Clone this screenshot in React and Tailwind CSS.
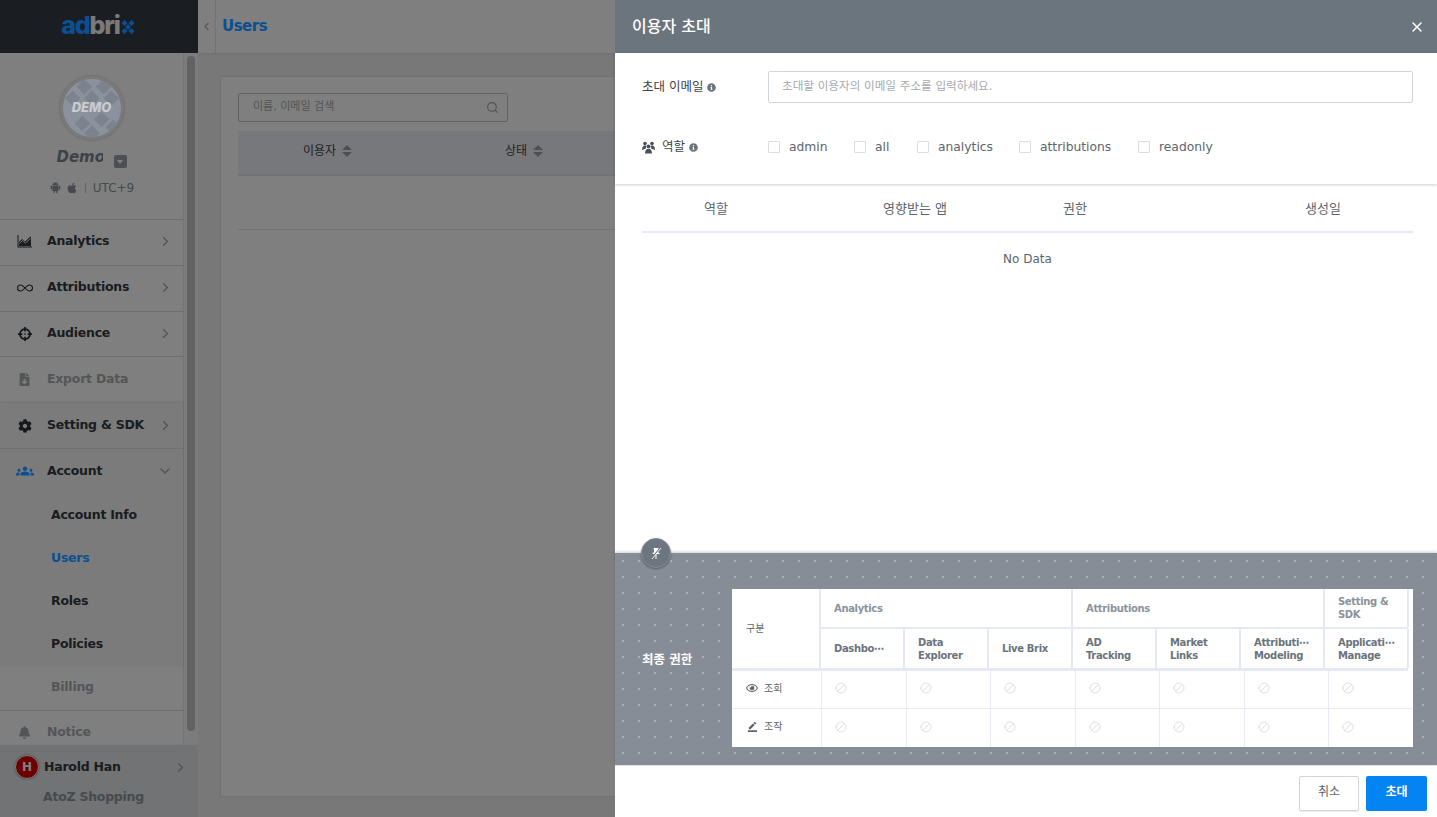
import { ChevronDown, ChevronLeft, ChevronRight, Ban, Infinity as InfinityIcon, Search, X } from "lucide-react";
import { AiFillAndroid } from "react-icons/ai";
import { FaApple, FaBell, FaCog, FaCrosshairs, FaFileDownload, FaInfoCircle, FaRegEye } from "react-icons/fa";
import { MdBorderColor, MdGroups } from "react-icons/md";

const font = "font-['DejaVu_Sans','Noto_Sans_CJK_KR',sans-serif]";

function ChartIcon() {
  return (
    <svg width="15" height="13" viewBox="0 0 15 13" fill="currentColor">
      <path d="M0.5 0v12.5H15v-1H1.5V0z" />
      <path d="M2 11V7l3-3 3 2.5L13.5 1.5 14 2v9z" opacity="0.95" />
      <path d="M2.5 8.5l3-3 3 2.5 5-4.5" fill="none" stroke="#fff" strokeWidth="0.9" />
    </svg>
  );
}

function PinOffIcon() {
  return (
    <svg width="14" height="14" viewBox="0 0 14 14" fill="none" stroke="#fff">
      <path d="M4 2h6l-1 1v3l2 2H3l2-2V3z" fill="#fff" stroke="none" />
      <path d="M7 8v5" strokeWidth="1" />
      <path d="M2 13L12 1" strokeWidth="1.2" stroke="#6d7680" />
      <path d="M3 13L12 2" strokeWidth="0.9" />
    </svg>
  );
}

function RoleIcon() {
  return (
    <svg width="13" height="13" viewBox="0 0 13 13" fill="#4a5057">
      <circle cx="3" cy="2.6" r="1.8" />
      <circle cx="10" cy="2.6" r="1.8" />
      <circle cx="6.5" cy="5.4" r="1.9" />
      <path d="M0 9c0-3 1-4.500 3-4.500.7 0 1.200.2 1.600.5-.6.7-.9 1.700-.9 2.800-.9.3-2.300.7-3.700 1.200zM13 9c0-3-1-4.500-3-4.500-.7 0-1.200.2-1.600.5.6.7.9 1.700.9 2.800.9.3 2.300.7 3.700 1.200z" />
      <path d="M3 12.500c0-3.200 1.300-4.800 3.500-4.800s3.500 1.600 3.500 4.800z" />
    </svg>
  );
}

function DemoBadge() {
  return (
    <div className="w-[64px] h-[64px] rounded-full bg-[#f4f4f4] p-[3px] shadow-[0_0_3px_rgba(0,0,0,0.25)]">
      <div className="relative z-10 w-full h-full rounded-full overflow-hidden bg-[#8b929d] flex items-center justify-center">
        <svg className="absolute inset-0" width="58" height="58" viewBox="0 0 60 60" fill="#7c838e">
          <path d="M22 0l8 8-8 8-8-8zM42 0l8 8-8 8-8-8zM10 12l8 8-8 8-8-8zM30 12l8 8-8 8-8-8zM50 12l8 8-8 8-8-8zM20 38l8 8-8 8-8-8zM40 34l8 8-8 8-8-8zM30 48l8 8-8 8-8-8zM52 42l8 8-8 8-8-8z" />
        </svg>
        <span className="relative text-[13px] font-extrabold italic text-[#c9ccd1] font-['Inter',sans-serif]">DEMO</span>
      </div>
    </div>
  );
}

function NavRow({ icon, label, open, muted, active, className = "h-[46px] pb-[2px] border-b border-[#dcdfe0]" }) {
  return (
    <div className={`flex items-center pl-[17px] pr-[10px] ${className}`}>
      <span className={`relative w-[15px] h-[16px] flex items-center justify-center ${active ? "z-10 text-[#0a4f92]" : muted ? "text-[#a8abae]" : "text-[#2c3136]"}`}>
        {icon}
      </span>
      <span className={`ml-[15px] flex-1 text-[12.5px] tracking-[-0.25px] font-bold ${muted ? "text-[#a8abae]" : "text-[#343a40]"}`}>{label}</span>
      {!muted &&
        (open ? (
          <ChevronDown size={16} className="text-[#a0a4a8]" />
        ) : (
          <ChevronRight size={15} className="text-[#a0a4a8]" />
        ))}
    </div>
  );
}

function SubRow({ label, color = "text-[#343a40]", raised }) {
  return (
    <div className={`h-[43px] flex items-center pl-[51px] pb-[2px] text-[12.5px] tracking-[-0.25px] font-bold ${color} ${raised ? "relative z-10" : ""}`}>
      {label}
    </div>
  );
}

function Sidebar() {
  return (
    <aside className="w-[198px] shrink-0 flex flex-col">
      <div className="h-[53px] bg-[#343c44] flex items-center justify-center">
        <div className="flex items-center -mt-[2px] ml-[-2px]">
          <span className="relative z-10 text-[25px] leading-none font-extrabold tracking-[-1.2px] font-['Inter',sans-serif] text-[#0a4f92]">ad</span>
          <span className="text-[25px] leading-none font-extrabold tracking-[-1.2px] font-['Inter',sans-serif] text-[#f5f5f5]">bri</span>
          <svg width="14" height="14" viewBox="0 0 14 14" fill="#0a4f92" className="relative z-10 mt-[3px] ml-[1px]">
            <path d="M3.5 0l3 3-3 3-3-3zM10.5 0l3 3-3 3-3-3zM7 4l3 3-3 3-3-3zM3.5 8l3 3-3 3-3-3zM10.5 8l3 3-3 3-3-3z" />
          </svg>
        </div>
      </div>
      <div className="flex-1 flex min-h-0">
        <div className="w-[184px] shrink-0 flex flex-col bg-white border-r border-[#e6e8e8]">
          <div className="h-[167px] border-b border-[#dcdfe0] flex flex-col items-center pt-[23px]">
            <DemoBadge />
            <div className="mt-[6px] flex items-start w-[70px]">
              <span className="text-[15px] font-bold italic text-[#7d858d] w-[46px] overflow-hidden">Demo</span>
              <span className="ml-[11px] mt-[9px] w-[13px] h-[13px] rounded-[2px] bg-[#9aa0a7] flex items-center justify-center">
                <span className="border-x-[3px] border-x-transparent border-t-[4px] border-t-white" />
              </span>
            </div>
            <div className="mt-[10px] flex items-center text-[12px] text-[#8e9399]">
              <AiFillAndroid size={13} />
              <FaApple size={12} className="ml-[4px]" />
              <span className="mx-[7px] w-px h-[10px] bg-[#c5c8cb]" />
              <span>UTC+9</span>
            </div>
          </div>
          <NavRow icon={<ChartIcon />} label="Analytics" />
          <NavRow icon={<InfinityIcon size={18} strokeWidth={1.5} className="shrink-0" />} label="Attributions" />
          <NavRow icon={<FaCrosshairs size={14} />} label="Audience" className="h-[45px] pb-[1px] border-b border-[#dcdfe0]" />
          <NavRow icon={<FaFileDownload size={13} />} label="Export Data" muted className="h-[46px] pb-[2px]" />
          <div className="bg-[#f6f7f7] shadow-[0_-1px_2px_rgba(0,0,0,0.12)]">
            <NavRow icon={<FaCog size={14} />} label="Setting & SDK" className="h-[46px] border-b border-[#dcdfe0]" />
            <NavRow icon={<MdGroups size={18} className="shrink-0" />} label="Account" open active className="h-[46px] pb-[2px]" />
            <SubRow label="Account Info" />
            <SubRow label="Users" color="text-[#0a4f92]" raised />
            <SubRow label="Roles" />
            <SubRow label="Policies" />
          </div>
          <SubRow label="Billing" color="text-[#a8abae]" />
          <div className="h-[35px] border-t border-[#dcdfe0] flex items-center pl-[17px] pt-[8px] text-[12.5px] tracking-[-0.25px] font-bold text-[#a8abae]">
            <FaBell size={13} className="ml-[1px]" />
            <span className="ml-[16px]">Notice</span>
          </div>
        </div>
        <div className="w-[14px] shrink-0 bg-[#f8f8f8]">
          <div className="w-[8px] h-[675px] mt-[3px] ml-[3px] rounded-full bg-[#c4c4c4]" />
        </div>
      </div>
      <div className="h-[72px] bg-[#e2e6e9] pt-[10px]">
        <div className="flex items-center pl-[15px] pr-[10px]">
          <span className="w-[24px] h-[24px] rounded-full bg-[#d80000] border-[1.5px] border-white shadow-[0_0_2px_rgba(0,0,0,0.5)] flex items-center justify-center text-[12px] font-bold text-white">H</span>
          <span className="ml-[5px] flex-1 text-[12.5px] tracking-[-0.25px] font-bold text-[#343a40]">Harold Han</span>
          <ChevronRight size={15} className="text-[#a0a4a8]" />
        </div>
        <div className="mt-[9px] pl-[43px] text-[12.5px] tracking-[-0.25px] font-bold text-[#8e949b]">AtoZ Shopping</div>
      </div>
    </aside>
  );
}

function SortLabel({ label }) {
  return (
    <span className="flex items-center gap-[6px] text-[12px] text-[#3e444a]">
      {label}
      <span className="flex flex-col gap-[2px]">
        <span className="border-x-[5px] border-x-transparent border-b-[5px] border-b-[#9aa0a7]" />
        <span className="border-x-[5px] border-x-transparent border-t-[5px] border-t-[#9aa0a7]" />
      </span>
    </span>
  );
}

function MainPage() {
  return (
    <main className="flex-1 flex flex-col min-w-0 bg-[#f0f0f0]">
      <header className="h-[53px] bg-white flex items-center shadow-[0_1px_2px_rgba(0,0,0,0.1)]">
        <div className="w-[18px] h-full border-r border-[#e4e4e4] flex items-center justify-center">
          <ChevronLeft size={13} className="text-[#a8abae]" />
        </div>
        <h1 className="relative z-10 ml-[6px] text-[15px] tracking-[-0.5px] font-bold text-[#0a4f92]">Users</h1>
      </header>
      <div className="flex-1 px-[22px] pt-[23px] pb-[20px]">
        <div className="h-full bg-white border border-[#e2e2e2] pt-[16px] pl-[17px]">
          <div className="w-[270px] h-[29px] border border-[#bfc3c9] rounded-[2px] flex items-center pl-[14px] pr-[8px] text-[11px] text-[#a5aab0]">
            <span className="flex-1">이름, 이메일 검색</span>
            <Search size={13} className="text-[#9aa0a7]" />
          </div>
          <div className="mt-[9px] h-[45px] bg-[#eef1f6] border-b-2 border-[#e0e4f0] flex items-center pb-[4px]">
            <div className="w-[114px] flex justify-end"><SortLabel label="이용자" /></div>
            <div className="ml-[153px]"><SortLabel label="상태" /></div>
          </div>
          <div className="h-[54px] border-b border-[#e2e2e2]" />
        </div>
      </div>
    </main>
  );
}

function RoleCheck({ label, className }) {
  return (
    <label className={`flex items-center text-[12.3px] text-[#5d656d] ${className}`}>
      <span className="w-[12px] h-[12px] border border-[#d9dde4] rounded-[1px] bg-white" />
      <span className="ml-[9px]">{label}</span>
    </label>
  );
}

function HeadCell({ children, width }) {
  return (
    <div className={`${width} shrink-0 border-r-2 border-[#e6e9f4] pl-[13px] pr-[2px] flex items-center text-[10px] tracking-[-0.35px] font-bold leading-[13px]`}>
      <span>{children}</span>
    </div>
  );
}

const subHeads = [
  ["Dashbo⋯"],
  ["Data", "Explorer"],
  ["Live Brix"],
  ["AD", "Tracking"],
  ["Market", "Links"],
  ["Attributi⋯", "Modeling"],
  ["Applicati⋯", "Manage"],
];

function PermRow({ icon, label, last }) {
  return (
    <div className={`h-[38px] flex ${last ? "" : "border-b border-[#e8ebf6]"}`}>
      <div className="w-[90px] shrink-0 border-r border-[#e8ebf6] pl-[14px] pb-[3px] flex items-center text-[10px] text-[#5d656d]">
        <span className="w-[12px] flex justify-center text-[#5d656d]">{icon}</span>
        <span className="ml-[6px]">{label}</span>
      </div>
      {subHeads.map((h, i) => (
        <div key={i} className="flex-1 border-r border-[#e8ebf6] last:border-r-0 pl-[13px] pb-[3px] flex items-center">
          <Ban size={12} strokeWidth={2} className="-scale-x-100 text-[#dde1e7]" />
        </div>
      ))}
    </div>
  );
}

function PermissionPanel() {
  return (
    <section className="relative h-[212px] shrink-0 flex bg-[#868d97] bg-[radial-gradient(circle,rgba(255,255,255,0.55)_0.5px,transparent_1px)] bg-[length:16px_16px] pl-[27px] pt-[36px] shadow-[0_-1px_3px_rgba(0,0,0,0.2)]">
      <button className="absolute left-[26px] -top-[15px] w-[30px] h-[30px] rounded-full bg-[#6d7680] border border-[#868d97] shadow-[0_1px_2px_rgba(0,0,0,0.35)] flex items-center justify-center">
        <PinOffIcon />
      </button>
      <div className="w-[90px] mt-[62px] text-[12.5px] font-bold text-white">최종 권한</div>
      <div className="w-[681px] h-[158px] bg-white">
        <div className="h-[82px] flex border-b-[3px] border-[#e6e9f4] mr-[5px]">
          <div className="w-[89px] shrink-0 border-r-2 border-[#e6e9f4] pl-[14px] flex items-center text-[10px] text-[#5d656d]">구분</div>
          <div className="flex-1 flex flex-col min-w-0">
            <div className="h-[40px] flex border-b-2 border-[#e6e9f4] text-[#8b929c]">
              <HeadCell width="w-[252px]">Analytics</HeadCell>
              <HeadCell width="w-[252px]">Attributions</HeadCell>
              <HeadCell width="w-[84px]">
                Setting &amp;<br />SDK
              </HeadCell>
            </div>
            <div className="flex-1 flex text-[#6b737d]">
              {subHeads.map((h, i) => (
                <HeadCell key={i} width="w-[84px]">
                  {h[0]}
                  {h[1] && <br />}
                  {h[1]}
                </HeadCell>
              ))}
            </div>
          </div>
        </div>
        <PermRow icon={<FaRegEye size={12} />} label="조회" />
        <PermRow icon={<MdBorderColor size={11} />} label="조작" last />
      </div>
    </section>
  );
}

function InviteDrawer() {
  return (
    <div className="absolute z-20 top-0 right-0 bottom-0 w-[822px] flex flex-col bg-white">
      <div className="h-[53px] shrink-0 bg-[#6b757e] flex items-center justify-between pl-[17px] pr-[12px]">
        <h2 className="text-[16px] font-medium text-white">이용자 초대</h2>
        <X size={16} strokeWidth={2.2} className="text-white" />
      </div>
      <div className="h-[131px] shrink-0 pl-[27px] pr-[24px] pt-[18px] shadow-[0_1px_3px_rgba(0,0,0,0.2)] z-10">
        <div className="flex items-center">
          <div className="w-[126px] flex items-center text-[12.5px] text-[#3e444a]">
            초대 이메일
            <FaInfoCircle size={9} className="ml-[4px] text-[#6b737d]" />
          </div>
          <div className="flex-1 h-[32px] border border-[#d2d6dc] rounded-[2px] flex items-center pl-[13px] text-[11.6px] text-[#a5aab0]">
            초대할 이용자의 이메일 주소를 입력하세요.
          </div>
        </div>
        <div className="mt-[35px] flex items-center">
          <div className="w-[126px] flex items-center text-[12.5px] text-[#3e444a]">
            <RoleIcon />
            <span className="ml-[7px]">역할</span>
            <FaInfoCircle size={9} className="ml-[4px] text-[#6b737d]" />
          </div>
          <RoleCheck label="admin" className="w-[86px]" />
          <RoleCheck label="all" className="w-[63px]" />
          <RoleCheck label="analytics" className="w-[102px]" />
          <RoleCheck label="attributions" className="w-[118px]" />
          <RoleCheck label="readonly" className="ml-[1px]" />
        </div>
      </div>
      <div className="flex-1 pl-[27px] pr-[24px]">
        <div className="h-[49px] grid grid-cols-[148px_250px_70px_1fr_180px] items-center pt-[3px] border-b-2 border-[#e8eaf6] text-[13px] text-[#5d656d] text-center">
          <div>역할</div>
          <div>영향받는 앱</div>
          <div>권한</div>
          <div />
          <div>생성일</div>
        </div>
        <div className="pt-[17px] text-center text-[12px] text-[#5d656d]">No Data</div>
      </div>
      <PermissionPanel />
      <div className="h-[52px] shrink-0 border-t border-[#e8eaf0] flex items-center justify-end gap-[7px] pr-[10px] pt-[3px]">
        <button className="w-[60px] h-[35px] pb-[2px] border border-[#d2d6dc] rounded-[2px] bg-white text-[12px] text-[#5d656d] shadow-[0_1px_1px_rgba(0,0,0,0.08)]">취소</button>
        <button className="w-[61px] h-[35px] pb-[2px] rounded-[2px] bg-[#0483f2] text-[12px] font-bold text-white">초대</button>
      </div>
    </div>
  );
}

export default function App() {
  return (
    <div className={`relative h-[817px] w-full flex overflow-hidden ${font}`}>
      <Sidebar />
      <MainPage />
      <div className="absolute inset-0 bg-black/50" />
      <InviteDrawer />
    </div>
  );
}
